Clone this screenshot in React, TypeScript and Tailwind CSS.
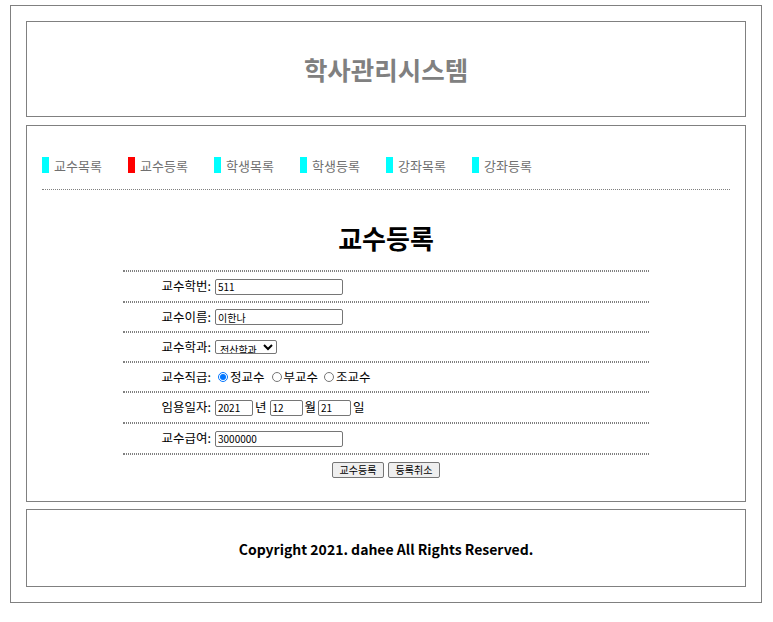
const font = { fontFamily: '"Noto Sans CJK KR", "Noto Sans", sans-serif' };

const menus = [
  { name: '교수목록', active: false },
  { name: '교수등록', active: true },
  { name: '학생목록', active: false },
  { name: '학생등록', active: false },
  { name: '강좌목록', active: false },
  { name: '강좌등록', active: false },
];

function Line() {
  return <div className="border-y border-dotted border-[#808080]" />;
}

function Row({ label, h, children }: { label: string; h: string; children: React.ReactNode }) {
  return (
    <div className={`flex items-center ${h}`}>
      <span className="w-[88px] text-right text-[12.5px] text-black">{label}</span>
      <div className="ml-[4px] flex items-center text-[12.5px] text-black">{children}</div>
    </div>
  );
}

const inputCls =
  'h-[16px] border border-[#767676] rounded-[2px] px-[2px] text-[10px] text-black outline-none';

export default function App() {
  return (
    <div className="min-h-screen bg-white" style={font}>
      <div className="ml-[10px] mt-[5px] w-[752px] border border-[#808080] p-[15px]">
        {/* Header */}
        <header className="flex h-[96px] items-center justify-center border border-[#808080]">
          <h1 className="text-[25.5px] font-bold leading-none text-[#808080]">학사관리시스템</h1>
        </header>

        {/* Main */}
        <section className="mt-[8px] h-[377px] border border-[#808080] px-[15px] pt-[31px]">
          <ul className="flex">
            {menus.map((m) => (
              <li key={m.name} className="flex w-[86px] items-center">
                <span className={`h-[16px] w-[7px] ${m.active ? 'bg-[#ff0000]' : 'bg-[#00ffff]'}`} />
                <span className="ml-[5px] text-[13px] leading-none text-[#707070]">{m.name}</span>
              </li>
            ))}
          </ul>
          <div className="mt-[16px] border-t border-dotted border-[#808080]" />

          <h2 className="mt-[34px] text-center text-[26px] font-bold leading-[28px] text-black">교수등록</h2>

          <form className="mx-auto mt-[18px] w-[526px]" onSubmit={(e) => e.preventDefault()}>
            <Line />
            <Row label="교수학번:" h="h-[29px]">
              <input className={`${inputCls} w-[128px]`} defaultValue="511" />
            </Row>
            <Line />
            <Row label="교수이름:" h="h-[28px]">
              <input className={`${inputCls} w-[128px]`} defaultValue="이한나" />
            </Row>
            <Line />
            <Row label="교수학과:" h="h-[28px]">
              <select className="h-[14px] w-[62px] border border-[#767676] rounded-[2px] p-0 text-[10px] leading-[12px] text-black">
                <option>전산학과</option>
                <option>전자학과</option>
              </select>
            </Row>
            <Line />
            <Row label="교수직급:" h="h-[28px]">
              <label className="flex items-center">
                <input type="radio" name="grade" defaultChecked className="m-0 ml-[3px] h-[10px] w-[10px]" />
                <span className="ml-[2px]">정교수</span>
              </label>
              <label className="ml-[7px] flex items-center">
                <input type="radio" name="grade" className="m-0 h-[10px] w-[10px]" />
                <span className="ml-[2px]">부교수</span>
              </label>
              <label className="ml-[6px] flex items-center">
                <input type="radio" name="grade" className="m-0 h-[10px] w-[10px]" />
                <span className="ml-[2px]">조교수</span>
              </label>
            </Row>
            <Line />
            <Row label="임용일자:" h="h-[29px]">
              <input className={`${inputCls} w-[38px]`} defaultValue="2021" />
              <span className="ml-[2px]">년</span>
              <input className={`${inputCls} ml-[3px] w-[33px]`} defaultValue="12" />
              <span className="ml-[2px]">월</span>
              <input className={`${inputCls} ml-[2px] w-[33px]`} defaultValue="21" />
              <span className="ml-[2px]">일</span>
            </Row>
            <Line />
            <Row label="교수급여:" h="h-[29px]">
              <input className={`${inputCls} w-[128px]`} defaultValue="3000000" />
            </Row>
            <Line />
            <div className="mt-[7px] flex justify-center gap-[4px]">
              <button type="submit" className="h-[16px] w-[52px] border border-[#767676] rounded-[2px] bg-[#efefef] text-[10px] leading-none text-black">
                교수등록
              </button>
              <button type="reset" className="h-[16px] w-[52px] border border-[#767676] rounded-[2px] bg-[#efefef] text-[10px] leading-none text-black">
                등록취소
              </button>
            </div>
          </form>
        </section>

        {/* Footer */}
        <footer className="mt-[7px] flex h-[78px] items-center justify-center border border-[#808080] pt-[3px]">
          <p className="text-[14px] font-bold text-black">Copyright 2021. dahee All Rights Reserved.</p>
        </footer>
      </div>
    </div>
  );
}
